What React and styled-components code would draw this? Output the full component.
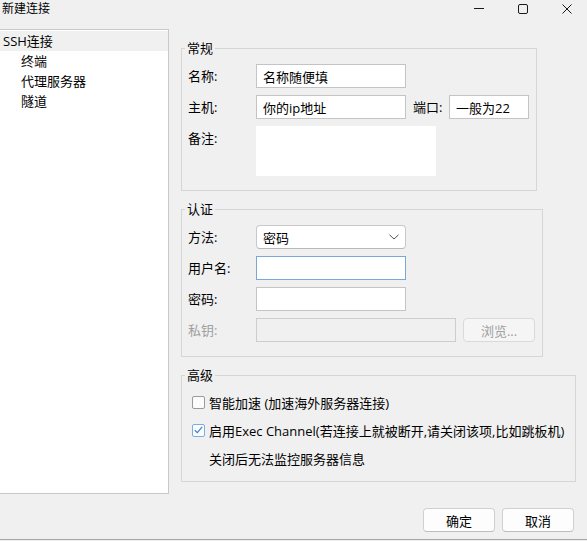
import styled, { createGlobalStyle } from 'styled-components'

const GlobalStyle = createGlobalStyle`
  html, body {
    margin: 0;
    padding: 0;
    background: #f0f0f0;
  }
  body {
    font-family: "Open Sans", "Noto Sans CJK SC", sans-serif;
    font-size: 13px;
    color: #000;
  }
  * {
    box-sizing: border-box;
  }
`;

const treeItems = [
  { label: 'SSH连接', level: 0, selected: true },
  { label: '终端', level: 1 },
  { label: '代理服务器', level: 1 },
  { label: '隧道', level: 1 },
];

const App = () => {
  return (
    <>
      <GlobalStyle />
      <Window>
        <TitleBar>
          <Title>新建连接</Title>
          <Controls>
            <svg width="10" height="10" viewBox="0 0 10 10">
              <line x1="0" y1="4.5" x2="10" y2="4.5" stroke="#1a1a1a" strokeWidth="1" />
            </svg>
            <svg width="10" height="10" viewBox="0 0 10 10">
              <rect x="0.5" y="0.5" width="9" height="9" rx="1.5" fill="none" stroke="#1a1a1a" strokeWidth="1" />
            </svg>
            <svg width="10" height="10" viewBox="0 0 10 10">
              <path d="M0.5 0.5 L9.5 9.5 M9.5 0.5 L0.5 9.5" stroke="#1a1a1a" strokeWidth="1" />
            </svg>
          </Controls>
        </TitleBar>

        <Body>
          <Tree>
            {treeItems.map((item) => (
              <TreeItem key={item.label} $level={item.level} $selected={item.selected}>
                {item.label}
              </TreeItem>
            ))}
          </Tree>

          <Content>
            <Group $width={356}>
              <Legend>常规</Legend>
              <Fields $pad="9px 0 14px 6px" $gap={7}>
                <Row>
                  <Label>名称:</Label>
                  <TextInput $w={150} defaultValue="名称随便填" />
                </Row>
                <Row>
                  <Label>主机:</Label>
                  <TextInput $w={150} defaultValue="你的ip地址" />
                  <Label $w={36} $ml={7}>端口:</Label>
                  <TextInput $w={80} defaultValue="一般为22" />
                </Row>
                <Row>
                  <Label>备注:</Label>
                  <Notes />
                </Row>
              </Fields>
            </Group>

            <Group $width={362}>
              <Legend>认证</Legend>
              <Fields $pad="9px 0 14px 6px" $gap={7}>
                <Row>
                  <Label>方法:</Label>
                  <SelectBox>
                    <span>密码</span>
                    <svg width="10" height="6" viewBox="0 0 10 6">
                      <path d="M0.5 0.8 L5 5 L9.5 0.8" fill="none" stroke="#555" strokeWidth="1" />
                    </svg>
                  </SelectBox>
                </Row>
                <Row>
                  <Label>用户名:</Label>
                  <TextInput $w={150} $focus />
                </Row>
                <Row>
                  <Label>密码:</Label>
                  <TextInput $w={150} type="password" />
                </Row>
                <Row>
                  <Label $disabled>私钥:</Label>
                  <TextInput $w={200} disabled />
                  <Button $w={72} $ml={7} disabled>浏览...</Button>
                </Row>
              </Fields>
            </Group>

            <Group $width={395}>
              <Legend>高级</Legend>
              <Fields $pad="10px 0 13px 10px" $gap={8}>
                <CheckRow>
                  <Checkbox />
                  <span>智能加速 (加速海外服务器连接)</span>
                </CheckRow>
                <CheckRow>
                  <Checkbox $checked>
                    <svg width="9" height="8" viewBox="0 0 9 8">
                      <path d="M0.8 4.2 L3.3 6.6 L8.2 0.9" fill="none" stroke="#3a82d6" strokeWidth="1.2" />
                    </svg>
                  </Checkbox>
                  <span>启用Exec Channel(若连接上就被断开,请关闭该项,比如跳板机)</span>
                </CheckRow>
                <CheckRow $indent={17}>关闭后无法监控服务器信息</CheckRow>
              </Fields>
            </Group>
          </Content>
        </Body>

        <Footer>
          <Button $w={72}>确定</Button>
          <Button $w={72}>取消</Button>
        </Footer>
      </Window>
    </>
  );
};

export default App

const Window = styled.div`
  width: 587px;
  height: 540px;
  display: flex;
  flex-direction: column;
  border-bottom: 1px solid #a6a6a6;
`;

const TitleBar = styled.div`
  height: 29px;
  display: flex;
  justify-content: space-between;
  align-items: flex-start;
  flex-shrink: 0;
`;

const Title = styled.div`
  padding: 1px 0 0 2px;
  font-size: 12px;
  line-height: 16px;
`;

const Controls = styled.div`
  display: flex;
  gap: 34px;
  padding: 4px 15px 0 0;

  svg {
    display: block;
  }
`;

const Body = styled.div`
  display: flex;
  height: 465px;
  flex-shrink: 0;
`;

const Tree = styled.div`
  width: 169px;
  height: 100%;
  background: #fff;
  border: 1px solid #c8c8c8;
  border-left: none;
  padding-top: 1px;
`;

const TreeItem = styled.div`
  height: 20px;
  line-height: 20px;
  padding-left: ${(p) => (p.$level ? 21 : 3)}px;
  background: ${(p) => (p.$selected ? '#f0f0f0' : 'transparent')};
  white-space: nowrap;
`;

const Content = styled.div`
  display: flex;
  flex-direction: column;
  align-items: flex-start;
  gap: 12px;
  padding: 13px 0 0 12px;
`;

const Group = styled.fieldset`
  width: ${(p) => p.$width}px;
  margin: 0;
  padding: 0;
  border: 1px solid #d6d6d6;
  min-width: 0;
`;

const Legend = styled.legend`
  margin-left: 3px;
  padding: 0 2px;
  font-size: 13px;
  line-height: 13px;
`;

const Fields = styled.div`
  display: flex;
  flex-direction: column;
  gap: ${(p) => p.$gap}px;
  padding: ${(p) => p.$pad};
`;

const Row = styled.div`
  display: flex;
  align-items: flex-start;
`;

const Label = styled.label`
  width: ${(p) => p.$w ?? 68}px;
  margin-left: ${(p) => p.$ml ?? 0}px;
  height: 24px;
  line-height: 24px;
  flex-shrink: 0;
  color: ${(p) => (p.$disabled ? '#a0a0a0' : '#000')};
`;

const TextInput = styled.input`
  width: ${(p) => p.$w}px;
  height: 24px;
  padding: 0 6px;
  margin: 0;
  border: 1px solid ${(p) => (p.$focus ? '#7aa6da' : '#c4c4c4')};
  background: #fff;
  font: inherit;
  font-size: 13px;
  color: #000;
  outline: none;
  flex-shrink: 0;

  &:disabled {
    background: #f0f0f0;
    border-color: #cdcdcd;
  }
`;

const Notes = styled.textarea`
  width: 180px;
  height: 50px;
  margin: 0;
  border: none;
  background: #fff;
  resize: none;
  outline: none;
  font: inherit;
`;

const SelectBox = styled.div`
  width: 150px;
  height: 24px;
  display: flex;
  align-items: center;
  justify-content: space-between;
  padding: 0 6px 0 6px;
  background: #fff;
  border: 1px solid #c8c8c8;
  border-bottom-color: #b8b8b8;
  border-radius: 4px;

  svg {
    display: block;
  }
`;

const Button = styled.button`
  width: ${(p) => p.$w}px;
  margin-left: ${(p) => p.$ml ?? 0}px;
  height: 24px;
  padding: 0;
  font: inherit;
  font-size: 13px;
  color: #000;
  background: #fdfdfd;
  border: 1px solid #d0d0d0;
  border-bottom-color: #bdbdbd;
  border-radius: 4px;
  flex-shrink: 0;

  &:disabled {
    color: #a0a0a0;
    background: #f5f5f5;
    border-color: #dadada;
  }
`;

const CheckRow = styled.div`
  height: 20px;
  display: flex;
  align-items: center;
  gap: 4px;
  padding-left: ${(p) => p.$indent ?? 0}px;
  white-space: nowrap;
`;

const Checkbox = styled.span`
  width: 13px;
  height: 13px;
  flex-shrink: 0;
  display: flex;
  align-items: center;
  justify-content: center;
  background: #fcfcfc;
  border: 1px solid ${(p) => (p.$checked ? '#7aaee6' : '#9a9a9a')};
  border-radius: 2px;

  svg {
    display: block;
  }
`;

const Footer = styled.div`
  flex: 1;
  display: flex;
  justify-content: flex-end;
  align-items: flex-start;
  gap: 7px;
  padding: 14px 13px 0 0;
`;
